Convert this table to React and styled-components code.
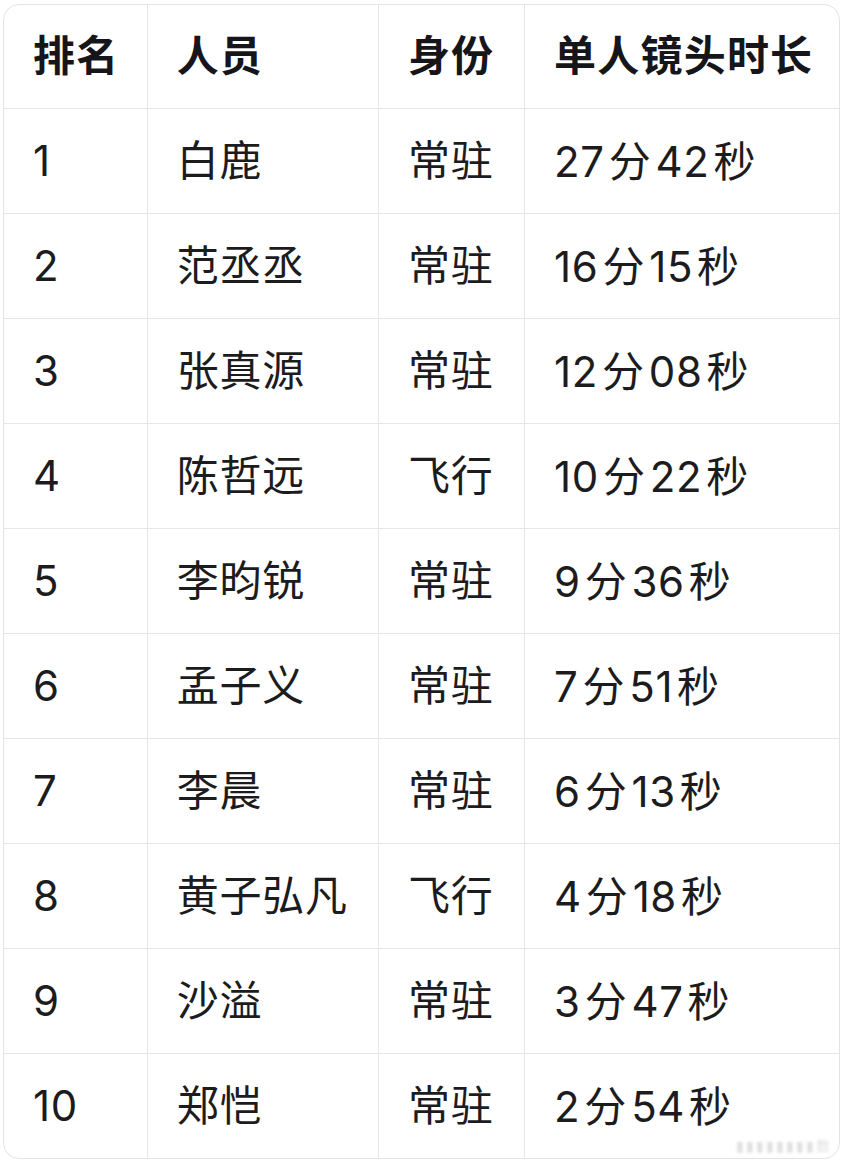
import React from "react";
import styled, { createGlobalStyle } from "styled-components";

const Global = createGlobalStyle`
  html, body { margin: 0; padding: 0; background: #ffffff; }
  body { font-family: "Inter", "Noto Sans CJK SC", sans-serif; color: #1c1c1e; }
`;

const Page = styled.div`
  width: 842px;
  height: 1163px;
  box-sizing: border-box;
  padding: 4px 2px 5px 3px;
`;

const Wrap = styled.div`
  position: relative;
`;

const Card = styled.div`
  border: 1.5px solid #e4e4e6;
  border-radius: 16px;
  overflow: hidden;
  background: #fff;
`;

const Table = styled.table`
  width: 100%;
  border-collapse: collapse;
  table-layout: fixed;
`;

const Col = styled.col`
  width: ${(p) => p.$w}px;
`;

const Row = styled.tr`
  height: ${(p) => (p.$head ? 103 : 105)}px;
`;

const Cell = styled.td`
  padding: 0 0 0 29px;
  font-size: 42px;
  font-weight: 400;
  letter-spacing: 0.8px;
  line-height: 1;
  vertical-align: middle;
  text-align: left;
  white-space: nowrap;
  color: #1c1c1e;
  border-top: 1.5px solid #e6e6e8;
  & + & { border-left: 1.5px solid #e6e6e8; }
`;

const Head = styled(Cell).attrs({ as: "th" })`
  font-weight: 600;
  color: #16161a;
  border-top: none;
  letter-spacing: 1.2px;
`;

const Num = styled.span`
  font-family: "Inter", sans-serif;
  letter-spacing: 0.6px;
`;

const Unit = styled.span`
  font-family: "Noto Sans CJK SC", sans-serif;
  margin: 0 4px;
`;

const Watermark = styled.div`
  position: absolute;
  right: 8px;
  bottom: 4px;
  font-size: 14px;
  color: rgba(160, 160, 160, 0.35);
  filter: blur(1.5px);
  letter-spacing: 2px;
`;

const rows = [
  ["1", "白鹿", "常驻", "27", "42"],
  ["2", "范丞丞", "常驻", "16", "15"],
  ["3", "张真源", "常驻", "12", "08"],
  ["4", "陈哲远", "飞行", "10", "22"],
  ["5", "李昀锐", "常驻", "9", "36"],
  ["6", "孟子义", "常驻", "7", "51"],
  ["7", "李晨", "常驻", "6", "13"],
  ["8", "黄子弘凡", "飞行", "4", "18"],
  ["9", "沙溢", "常驻", "3", "47"],
  ["10", "郑恺", "常驻", "2", "54"],
];

function Duration({ m, s }) {
  return (
    <>
      <Num>{m}</Num>
      <Unit>分</Unit>
      <Num>{s}</Num>
      <Unit>秒</Unit>
    </>
  );
}

export default function App() {
  return (
    <Page>
      <Global />
      <Wrap>
        <Card>
          <Table>
            <colgroup>
              <Col $w={143} />
              <Col $w={231} />
              <Col $w={146} />
              <Col $w={314} />
            </colgroup>
            <thead>
              <Row $head>
                <Head>排名</Head>
                <Head>人员</Head>
                <Head>身份</Head>
                <Head>单人镜头时长</Head>
              </Row>
            </thead>
            <tbody>
              {rows.map((r) => (
                <Row key={r[0]}>
                  <Cell><Num>{r[0]}</Num></Cell>
                  <Cell>{r[1]}</Cell>
                  <Cell>{r[2]}</Cell>
                  <Cell><Duration m={r[3]} s={r[4]} /></Cell>
                </Row>
              ))}
            </tbody>
          </Table>
        </Card>
        <Watermark>▮▮▮▮▮▮▮▮数</Watermark>
      </Wrap>
    </Page>
  );
}
